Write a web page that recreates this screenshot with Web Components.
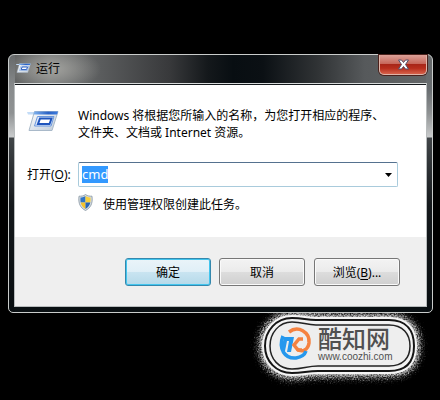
<!DOCTYPE html>
<html lang="zh-CN">
<head>
<meta charset="utf-8">
<title>运行</title>
<style>
html{background:#000}
body{margin:0;padding:54px 7px 0 8px;font:12px/17px "Noto Sans","Noto Sans CJK SC",sans-serif;color:#000}
u{text-underline-offset:2px}
</style>
</head>
<body>
<run-window heading="运行">
  <run-message>Windows 将根据您所输入的名称，为您打开相应的程序、文件夹、文档或 Internet 资源。</run-message>
  <combo-field value="cmd">打开(<u>O</u>):</combo-field>
  <shield-note>使用管理权限创建此任务。</shield-note>
  <push-button slot="actions" default>确定</push-button>
  <push-button slot="actions">取消</push-button>
  <push-button slot="actions">浏览(<u>B</u>)...</push-button>
</run-window>
<site-mark></site-mark>
<script>
const define = (name, html, setup) => customElements.define(name, class extends HTMLElement {
  connectedCallback() {
    if (this.shadowRoot) return;
    const t = document.createElement('template');
    t.innerHTML = html;
    this.attachShadow({mode: 'open'}).append(t.content.cloneNode(true));
    if (setup) setup(this, this.shadowRoot);
  }
});

define('run-icon', `<style>:host{display:block;flex:none}svg{display:block;width:100%}</style>
<svg viewBox="0 0 32 22" aria-hidden="true">
  <defs>
    <linearGradient id="f" x1="0" x2="1" y2="1"><stop stop-color="#fff"/><stop offset="1" stop-color="#bfcbd8"/></linearGradient>
    <linearGradient id="b" x1="0" x2="1"><stop stop-color="#7fb2ee"/><stop offset=".6" stop-color="#2961c4"/><stop offset="1" stop-color="#3c7be0"/></linearGradient>
  </defs>
  <path d="M0 2H9L8 4.500H1z" fill="#c3dcf7"/>
  <path d="M7.500 1.500H31L25 20.500H2z" fill="url(#f)" stroke="#a9b9c9"/>
  <path d="M7.500 1.500H31L30 4.500H6.500z" fill="url(#b)"/>
  <path d="M10.500 6.500H27L24 16H7.500z" fill="#dfeafa" stroke="#6a97dd"/>
  <path d="M13 8.500H24.500L22.500 14H11z" fill="#fff" stroke="#1f55bd" stroke-width="2"/>
</svg>`);

define('run-window', `<style>
:host{display:block;position:relative;box-sizing:border-box;border:1px solid #c9cccb;border-radius:6px 6px 5px 5px;padding:0 5px 5px;
  background:
   linear-gradient(#66696a,#898c8d 34px,#8f9293 58px,#c9cbcc 82px,#414548 83px,#15191c 150px,#080d10) left/6px 100% no-repeat,
   linear-gradient(#66696a,#686d70 34px,#8f9293 58px,#c9cbcc 82px,#414548 83px,#15191c 150px,#080d10) right/6px 100% no-repeat,
   radial-gradient(ellipse 50px 22px at 42px 14px,#a3a39f,#a3a39f00) top/100% 29px no-repeat,
   linear-gradient(90deg,#565858 0,#747676 10%,#5e6061 20%,#38393b 38%,#14181b 47%,#080e12 53%,#0b1014 60%,#303335 73%,#56595b 84%,#646768) top/100% 29px no-repeat,
   #0a1013}
header{display:flex;align-items:flex-start;height:28px}
.name{display:flex;align-items:center;gap:5px;height:26px;padding-left:2px;flex:1}
run-icon{width:15px}
.close{box-sizing:border-box;width:48px;height:20px;padding:0;border:1px solid #dfb4a8;border-top:0;border-radius:0 0 5px 5px;box-shadow:0 0 0 1px #4b211c;
 background:linear-gradient(#dba198,#c7685b 45%,#a82618 50%,#b72e1d 70%,#d6614a)}
.close svg{display:block;margin:auto}
.client{background:#fff;border:1px solid #b7bbbc;border-top-color:#d9dcdc;box-shadow:inset 0 1px #14191c}
main{display:grid;grid-template-columns:51px 1fr;padding:23px 28px 23px 12px}
.big{width:32px;padding-top:3px}
footer{display:flex;justify-content:flex-end;gap:8px;padding:21px 26px 20px;background:#efefef}
</style>
<header><div class="name"><run-icon></run-icon><span></span></div>
<button class="close" aria-label="关闭"><svg width="13" height="11" viewBox="0 0 13 11"><path d="M1.500 1H4.500L6.500 3.500 8.500 1H11.500L8.500 5.500 11.500 10H8.500L6.500 7.500 4.500 10H1.500L4.500 5.500z" fill="#fff" stroke="#54506a"/></svg></button></header>
<div class="client"><main><run-icon class="big"></run-icon><slot></slot></main><footer><slot name="actions"></slot></footer></div>`,
(host, root) => { root.querySelector('span').textContent = host.getAttribute('heading'); });

define('run-message', `<style>:host{display:block;line-height:17px;padding-right:8px}</style><slot></slot>`);

define('combo-field', `<style>
:host{grid-column:1/-1;display:grid;grid-template-columns:51px 1fr;align-items:center;margin-top:21px}
.box{display:flex;align-items:center;box-sizing:border-box;height:25px;border:1px solid #a9cbdc;border-top-color:#55718f;border-radius:2px;background:#fff}
input{flex:1;min-width:0;border:0;outline:0;padding:0 0 0 3px;background:none;font:inherit;font-size:13px;line-height:17px;color:#000}
input::selection{background:#3399ff;color:#fff}
button{width:17px;height:23px;border:0;padding:0;background:none}
svg{display:block;margin:auto}
</style><label for="v"><slot></slot></label><div class="box"><input id="v" type="text" aria-label="打开"><button aria-label="下拉"><svg width="7" height="4"><path d="M0 0H7L3.500 4z"/></svg></button></div>`,
(host, root) => {
  const input = root.querySelector('input');
  input.value = host.getAttribute('value');
  input.focus();
  input.select();
});

define('shield-note', `<style>:host{grid-column:2;display:flex;gap:10px;margin-top:7px;align-items:flex-start;line-height:18px}svg{display:block;flex:none}span{padding-top:2px}</style>
<svg width="15" height="17" viewBox="0 0 15 17" aria-hidden="true">
<defs><clipPath id="c"><path d="M7.500 2C9.500 3.500 11.500 3.500 12.500 3.500 13 9 11.500 12.500 7.500 15 3.500 12.500 2 9 2.500 3.500 3.500 3.500 5.500 3.500 7.500 2z"/></clipPath></defs>
<path d="M7.500.5C9.500 2.200 12 2.200 14 2.200 15 9.500 12.500 14 7.500 16.500 2.500 14 0 9.500 1 2.200 3 2.200 5.500 2.200 7.500.5z" fill="#d6dde2" stroke="#8796a2" stroke-width=".8"/>
<g clip-path="url(#c)"><path d="M0 0H7.500V8.500H0z" fill="#2f74c4"/><path d="M7.500 0H15V8.500H7.500z" fill="#f7cf3c"/><path d="M0 8.500H7.500V17H0z" fill="#f5c32b"/><path d="M7.500 8.500H15V17H7.500z" fill="#2864b4"/></g></svg>
<span><slot></slot></span>`);

define('push-button', `<style>
:host{display:block}
:host(:last-of-type){margin-left:1px}
button{box-sizing:border-box;width:86px;height:28px;padding:0;border:1px solid #777;border-radius:3px;font:inherit;color:#000;
 background:linear-gradient(#f3f3f3,#ebebeb 48%,#dddddd 50%,#cfcfcf);box-shadow:inset 0 0 0 1px #fafafa}
:host([default]) button{border-color:#3588ad;background:linear-gradient(#eaf4f9,#e0eff7 48%,#c9e4f1 50%,#b5d9e9);box-shadow:inset 0 0 0 1px #42c5ee}
</style><button><slot></slot></button>`);

define('site-mark', `<style>:host{display:flex;justify-content:flex-end;height:86px;margin-right:-1px}svg{display:block;flex:none;margin-top:-1px}
.cn{font:500 24px "Noto Sans CJK SC",sans-serif;fill:#505050}.url{font:10px "Liberation Sans",sans-serif;fill:#505050}</style>
<svg width="184" height="87" viewBox="250 313 184 87" role="img" aria-label="酷知网">
<defs>
<path id="s" d="M292 319C303 319 306 321 316 321H389C407 321 414 332 414 347S407 372 389 372H318C307 372 303 374 292 374 276 374 265 362 265 347S276 319 292 319z"/>
<filter id="n" x="-20%" y="-40%" width="140%" height="180%"><feGaussianBlur stdDeviation="3" result="b"/><feTurbulence type="fractalNoise" baseFrequency=".7" numOctaves="2" seed="4"/><feDisplacementMap in="b" scale="12" xChannelSelector="R" yChannelSelector="G"/></filter>
</defs>
<use href="#s" fill="#ddd" stroke="#ddd" stroke-width="11" filter="url(#n)"/>
<use href="#s" fill="#efefef" stroke="#f4f4f4" stroke-width="6"/>
<use href="#s" fill="none" stroke="#151515" stroke-width="2"/>
<path d="M292 323C303 323 306 326 316 326H389C403 326 410 335 410 347S403 367 389 367H318C307 367 303 370 292 370 279 370 270 360 270 347S279 323 292 323z" fill="#eee" stroke="#222" stroke-width="1.500"/>
<path d="M289 333C298 326 310 333 309 344 308 351 302 354 297 350" fill="none" stroke="#f58240" stroke-width="3.500"/>
<path d="M283 337C278 350 285 360 296 359 302 358 305 355 306 352" fill="none" stroke="#2698ed" stroke-width="3.500"/>
<path d="M284 338H294L291 353H287L289 342H287L285 352H281z" fill="#2698ed"/>
<path d="M303 340H299L294 346 298 351H302" fill="none" stroke="#f58240" stroke-width="3.500"/>
<text class="cn" x="318" y="349">酷知网</text>
<text class="url" x="318" y="361">www.coozhi.com</text>
</svg>`);
</script>
</body>
</html>
